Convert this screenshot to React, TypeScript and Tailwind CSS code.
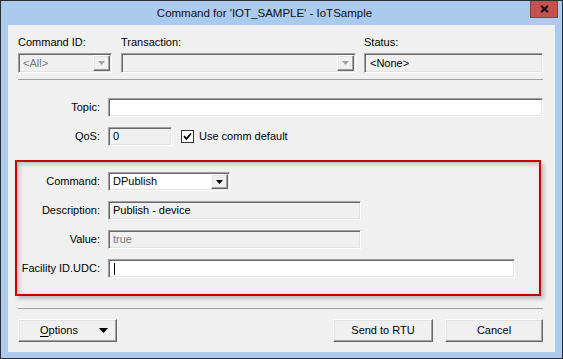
import React from "react";

const sunken =
  "border border-t-[#a0a0a0] border-l-[#a0a0a0] border-b-white border-r-white shadow-[inset_1px_1px_0_#696969,inset_-1px_-1px_0_#e3e3e3]";
const raised =
  "border border-t-white border-l-white border-b-[#696969] border-r-[#696969] shadow-[inset_-1px_-1px_0_#a0a0a0,inset_1px_1px_0_#e3e3e3] bg-[#f0f0f0]";

function Arrow({ color = "#000" }: { color?: string }) {
  return (
    <svg width="7" height="4" viewBox="0 0 7 4">
      <path d="M0 0H7L3.5 4Z" fill={color} />
    </svg>
  );
}

function ComboButton({ disabled = false }: { disabled?: boolean }) {
  return (
    <div className={`w-[17px] h-full flex items-center justify-center ${raised}`}>
      <Arrow color={disabled ? "#a0a0a0" : "#000"} />
    </div>
  );
}

function Label({ children, w }: { children: React.ReactNode; w: string }) {
  return <div className={`${w} text-right leading-[13px] shrink-0`}>{children}</div>;
}

export default function App() {
  return (
    <div className="w-[563px] h-[359px] bg-[#aacbee] border border-[#2d2d2d] flex flex-col font-['Liberation_Sans',Arial,sans-serif] text-[11px] text-black overflow-hidden">
      {/* title bar */}
      <div className="relative h-[24px] shrink-0 flex items-center justify-center pr-[34px]">
        <span className="text-[11.5px] text-[#111] leading-[14px] pb-[1px]">
          Command for 'IOT_SAMPLE' - IoTSample
        </span>
        <div className="absolute right-[4px] top-[-1px] w-[28px] h-[18px] bg-[#c75050] border border-t-0 border-[#8a3f3c] flex items-center justify-center">
          <svg width="9" height="8" viewBox="0 0 9 8">
            <path d="M1 0.8L8 7.2M8 0.8L1 7.2" stroke="#111" strokeWidth="2.2" />
          </svg>
        </div>
      </div>

      {/* client area */}
      <div className="mx-[7px] h-[327px] shrink-0 bg-[#f0f0f0] flex flex-col pl-[10px] pr-[12px] pt-[11px]">
        {/* top row */}
        <div className="flex">
          <div className="w-[94px] shrink-0">
            <div className="h-[13px] leading-[13px]">Command ID:</div>
            <div className={`mt-[4px] h-[20px] flex items-stretch ${sunken} p-[1px]`}>
              <div className="flex-1 pl-[3px] flex items-center text-[#7a7a7a]">&lt;All&gt;</div>
              <ComboButton disabled />
            </div>
          </div>
          <div className="w-[235px] ml-[9px] shrink-0">
            <div className="h-[13px] leading-[13px]">Transaction:</div>
            <div className={`mt-[4px] h-[20px] flex items-stretch ${sunken} p-[1px]`}>
              <div className="flex-1" />
              <ComboButton disabled />
            </div>
          </div>
          <div className="w-[179px] ml-[8px] shrink-0">
            <div className="h-[13px] leading-[13px]">Status:</div>
            <div className={`mt-[4px] h-[20px] flex items-center pl-[5px] ${sunken}`}>&lt;None&gt;</div>
          </div>
        </div>

        <div className="mt-[6px] h-px bg-[#a0a0a0] shrink-0" />

        {/* topic */}
        <div className="mt-[18px] h-[19px] flex items-center shrink-0">
          <Label w="w-[82px]">Topic:</Label>
          <div className={`ml-[8px] w-[435px] h-[19px] bg-white ${sunken}`} />
        </div>

        {/* qos */}
        <div className="mt-[10px] h-[19px] flex items-center shrink-0">
          <Label w="w-[82px]">QoS:</Label>
          <div className={`ml-[8px] w-[64px] h-[19px] flex items-center pl-[4px] ${sunken}`}>0</div>
          <div className="ml-[9px] w-[13px] h-[13px] bg-white border border-[#333] flex items-center justify-center">
            <svg width="9" height="9" viewBox="0 0 9 9">
              <path d="M1 4.2L3.4 6.8L8 1.5" stroke="#000" strokeWidth="1.8" fill="none" />
            </svg>
          </div>
          <span className="ml-[5px] leading-[13px]">Use comm default</span>
        </div>

        {/* highlighted group */}
        <div className="mt-[14px] ml-[-3px] w-[526px] h-[136px] shrink-0 border-2 border-[#c80000] shadow-[inset_2px_2px_5px_rgba(0,0,0,0.22),3px_3px_4px_rgba(0,0,0,0.22)] pt-[10px] flex flex-col gap-[10px]">
          <div className="h-[19px] flex items-center">
            <Label w="w-[83px]">Command:</Label>
            <div className={`ml-[8px] w-[122px] h-[19px] bg-white flex items-stretch p-[1px] ${sunken}`}>
              <div className="flex-1 pl-[3px] flex items-center">DPublish</div>
              <ComboButton />
            </div>
          </div>
          <div className="h-[19px] flex items-center">
            <Label w="w-[83px]">Description:</Label>
            <div className={`ml-[8px] w-[253px] h-[19px] flex items-center pl-[4px] ${sunken}`}>Publish - device</div>
          </div>
          <div className="h-[19px] flex items-center">
            <Label w="w-[83px]">Value:</Label>
            <div className={`ml-[8px] w-[253px] h-[19px] flex items-center pl-[4px] text-[#7a7a7a] ${sunken}`}>true</div>
          </div>
          <div className="h-[19px] flex items-center">
            <Label w="w-[83px]">Facility ID.UDC:</Label>
            <div className={`ml-[8px] w-[407px] h-[19px] bg-white flex items-center pl-[5px] ${sunken}`}>
              <div className="w-px h-[12px] bg-black" />
            </div>
          </div>
        </div>

        <div className="mt-[12px] h-px bg-[#a0a0a0] shrink-0" />

        {/* buttons */}
        <div className="mt-[10px] h-[23px] flex shrink-0">
          <div className={`w-[99px] h-[23px] flex items-center pl-[21px] pr-[8px] ${raised}`}>
            <span>
              <span className="underline underline-offset-[2px]">O</span>ptions
            </span>
            <span className="ml-auto">
              <svg width="9" height="5" viewBox="0 0 9 5">
                <path d="M0 0H9L4.5 5Z" fill="#000" />
              </svg>
            </span>
          </div>
          <div className="flex-1" />
          <div className={`w-[100px] h-[23px] flex items-center justify-center ${raised}`}>Send to RTU</div>
          <div className={`ml-[12px] w-[98px] h-[23px] flex items-center justify-center ${raised}`}>Cancel</div>
        </div>
      </div>
    </div>
  );
}
